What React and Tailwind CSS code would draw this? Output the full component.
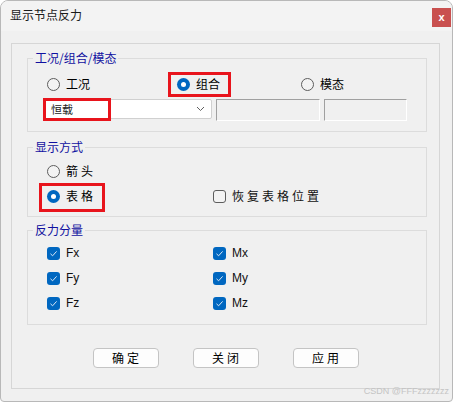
import React from "react";

const cjk = { fontFamily: '"Noto Sans CJK SC", "Noto Sans", sans-serif' };
const latin = { fontFamily: '"Liberation Sans", "Noto Sans", sans-serif' };

function Radio({ checked, label, spaced }) {
    return (
        <div className="flex items-center gap-[6px] h-[20px]">
            {checked ? (
                <span className="w-[13px] h-[13px] rounded-full bg-[#0067c0] flex items-center justify-center">
                    <span className="w-[5px] h-[5px] rounded-full bg-white" />
                </span>
            ) : (
                <span className="w-[13px] h-[13px] rounded-full border border-[#5d5d5d] bg-[#f3f3f3]" />
            )}
            <span className={"text-[12px] leading-[14px] text-black " + (spaced ? "tracking-[3px]" : "")} style={cjk}>
                {label}
            </span>
        </div>
    );
}

function Check({ checked, label, spaced, isLatin }) {
    return (
        <div className="flex items-center gap-[6px] h-[20px]">
            {checked ? (
                <span className="w-[13px] h-[13px] rounded-[3px] bg-[#0067c0] flex items-center justify-center">
                    <svg width="9" height="9" viewBox="0 0 9 9">
                        <path d="M1.5 4.8 L3.6 6.8 L7.6 2.4" fill="none" stroke="#dbe8f6" strokeWidth="1" />
                    </svg>
                </span>
            ) : (
                <span className="w-[13px] h-[13px] rounded-[3px] border border-[#5d5d5d] bg-[#f3f3f3]" />
            )}
            <span
                className={"text-[12px] leading-[14px] text-[#111] " + (spaced ? "tracking-[3px]" : "")}
                style={isLatin ? latin : cjk}
            >
                {label}
            </span>
        </div>
    );
}

function Group({ title, height, children }) {
    return (
        <div className={"w-[400px] border border-[#dcdcdc] flex flex-col " + height}>
            <span
                className="-mt-[8px] ml-[5px] px-[2px] self-start bg-[#f0f0f0] text-[12px] leading-[14px] text-[#1010a0]"
                style={cjk}
            >
                {title}
            </span>
            {children}
        </div>
    );
}

function Button({ label }) {
    return (
        <button
            className="w-[66px] h-[20px] bg-[#fdfdfd] border border-[#c4c4c4] rounded-[4px] text-[12px] leading-[14px] text-black tracking-[3px] pl-[3px]"
            style={cjk}
        >
            {label}
        </button>
    );
}

export default function App() {
    return (
        <div className="relative w-[453px] h-[403px] bg-white">
            <div className="w-[453px] h-[402px] border border-[#b8b8b8] rounded-t-[8px] rounded-b-[4px] bg-[#f0f0f0] overflow-hidden flex flex-col">
                {/* title bar */}
                <div className="h-[30px] bg-[#f3f3f3] flex items-start justify-between">
                    <span className="mt-[7px] ml-[9px] text-[12px] leading-[14px] text-[#1a1a1a]" style={cjk}>
                        显示节点反力
                    </span>
                    <div className="mt-[7px] mr-[1px] w-[19px] h-[19px] bg-[#c9504f] flex items-center justify-center">
                        <span className="text-white text-[11px] font-bold leading-none -mt-[1px]" style={latin}>x</span>
                    </div>
                </div>

                {/* main panel */}
                <div className="mt-[12px] ml-[10px] w-[429px] h-[346px] border border-[#d6d6d6] pl-[15px] pt-[14px] flex flex-col">
                    <Group title="工况/组合/模态" height="h-[74px]">
                        <div className="mt-[9px] pl-[19px] flex">
                            <div className="w-[130px]"><Radio label="工况" /></div>
                            <div className="w-[124px]"><Radio checked label="组合" /></div>
                            <Radio label="模态" />
                        </div>
                        <div className="mt-[5px] pl-[16px] flex items-start gap-[4px]">
                            <div className="w-[168px] h-[20px] bg-white border border-[#d0d0d0] rounded-[2px] flex items-center justify-between pl-[6px] pr-[6px]">
                                <span className="text-[11px] leading-[12px] text-[#222]" style={cjk}>恒载</span>
                                <svg width="9" height="6" viewBox="0 0 9 6">
                                    <path d="M1 1 L4.5 4.5 L8 1" fill="none" stroke="#606060" strokeWidth="1" />
                                </svg>
                            </div>
                            <div className="w-[104px] h-[22px] bg-[#f0f0f0] border border-t-[#a0a0a0] border-l-[#a0a0a0] border-b-white border-r-white" />
                            <div className="w-[83px] h-[22px] bg-[#f0f0f0] border border-t-[#a0a0a0] border-l-[#a0a0a0] border-b-white border-r-white" />
                        </div>
                    </Group>

                    <div className="mt-[15px]">
                        <Group title="显示方式" height="h-[70px]">
                            <div className="mt-[7px] pl-[19px]">
                                <Radio label="箭头" spaced />
                            </div>
                            <div className="mt-[5px] pl-[19px] flex">
                                <div className="w-[166px]"><Radio checked label="表格" spaced /></div>
                                <Check label="恢复表格位置" spaced />
                            </div>
                        </Group>
                    </div>

                    <div className="mt-[13px]">
                        <Group title="反力分量" height="h-[95px]">
                            <div className="mt-[6px] pl-[19px] flex flex-col gap-[5px]">
                                {[["Fx", "Mx"], ["Fy", "My"], ["Fz", "Mz"]].map(([a, b]) => (
                                    <div key={a} className="flex">
                                        <div className="w-[166px]"><Check checked isLatin label={a} /></div>
                                        <Check checked isLatin label={b} />
                                    </div>
                                ))}
                            </div>
                        </Group>
                    </div>

                    <div className="mt-[23px] -ml-[15px] flex justify-center gap-[34px]">
                        <Button label="确定" />
                        <Button label="关闭" />
                        <Button label="应用" />
                    </div>
                </div>
            </div>

            {/* annotation boxes */}
            <div className="absolute left-[168px] top-[72px] w-[63px] h-[25px] border-[3px] border-[#e8141c]" />
            <div className="absolute left-[43px] top-[98px] w-[68px] h-[23px] border-[3px] border-[#e8141c]" />
            <div className="absolute left-[39px] top-[183px] w-[66px] h-[29px] border-[3px] border-[#e8141c]" />

            <span className="absolute right-[4px] top-[386px] text-[9px] leading-[10px] text-[#c4c4c4]" style={latin}>
                CSDN @FFFzzzzzzz
            </span>
        </div>
    );
}
